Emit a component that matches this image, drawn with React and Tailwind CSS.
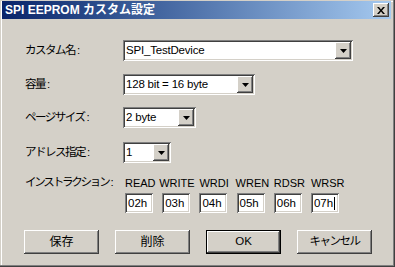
import React from "react";

const sunken =
  "shadow-[inset_1px_1px_0_#808080,inset_-1px_-1px_0_#ffffff,inset_2px_2px_0_#404040,inset_-2px_-2px_0_#d4d0c8]";
const raised =
  "shadow-[inset_-1px_-1px_0_#404040,inset_1px_1px_0_#ffffff,inset_-2px_-2px_0_#808080,inset_2px_2px_0_#d4d0c8]";

function Arrow() {
  return (
    <svg width="7" height="4" viewBox="0 0 7 4">
      <path d="M0 0H7L3.5 4Z" fill="#000" />
    </svg>
  );
}

function Combo({ width, value }) {
  return (
    <div
      className={`h-[21px] bg-white flex items-center p-[2px] ${sunken}`}
      style={{ width }}
    >
      <div className="flex-1 pl-[1px] text-[11.5px] tracking-[-0.2px] leading-[17px] whitespace-nowrap overflow-hidden">
        {value}
      </div>
      <div className={`w-[16px] h-[17px] bg-[#d4d0c8] flex items-center justify-center ${raised}`}>
        <Arrow />
      </div>
    </div>
  );
}

function Label({ text, width, tight }) {
  return (
    <div className="whitespace-nowrap flex items-center shrink-0" style={{ width }}>
      <span className={`text-[11.5px] ${tight ? "tracking-[-2.2px]" : "tracking-[-1.5px]"}`}>{text}</span>
      <span className="text-[11.5px] ml-[2px] font-['Liberation_Sans']">:</span>
    </div>
  );
}

function Row({ label, children, className = "" }) {
  return (
    <div className={`flex items-center ${className}`}>
      <Label text={label} width={98} />
      {children}
    </div>
  );
}

function Btn({ children, isDefault, kana }) {
  const txt = kana ? "text-[11.5px] tracking-[-1.5px]" : "text-[12px]";
  if (isDefault) {
    return (
      <div className="w-[75px] h-[24px] border border-black">
        <div className={`w-full h-full bg-[#d4d0c8] flex items-center justify-center ${raised}`}>
          <span className="text-[11.5px]">{children}</span>
        </div>
      </div>
    );
  }
  return (
    <div className={`w-[75px] h-[24px] bg-[#d4d0c8] flex items-center justify-center ${raised}`}>
      <span className={txt}>{children}</span>
    </div>
  );
}

const cols = [
  ["READ", "02h", "ml-0"],
  ["WRITE", "03h", "-ml-[3px]"],
  ["WRDI", "04h", "ml-0"],
  ["WREN", "05h", "-ml-[1px]"],
  ["RDSR", "06h", "ml-0"],
  ["WRSR", "07h", "ml-0"],
];

export default function App() {
  return (
    <div className="w-[395px] h-[267px] bg-[#d4d0c8] overflow-hidden text-[12px] text-black font-['Liberation_Sans','Noto_Sans_CJK_JP',sans-serif]">
      <div className="w-full h-full flex flex-col pl-[2px] pt-[1px] pr-[4px] pb-[3px] shadow-[inset_-1px_-1px_0_#404040,inset_-2px_-2px_0_#808080,inset_1px_1px_0_#d4d0c8,inset_2px_2px_0_#ffffff]">
        {/* title bar */}
        <div className="h-[18px] flex items-center justify-between pl-[3px] pr-[2px] bg-gradient-to-r from-[#0a246a] to-[#a6caf0]">
          <span className="text-white font-bold text-[12px] leading-[18px] whitespace-nowrap">
            SPI EEPROM カスタム設定
          </span>
          <div className={`w-[16px] h-[14px] bg-[#d4d0c8] flex items-center justify-center ${raised}`}>
            <svg width="8" height="7" viewBox="0 0 8 7">
              <path d="M0 0h2l2 2.5L6 0h2L5 3.5 8 7H6L4 4.5 2 7H0l3-3.5Z" fill="#000" />
            </svg>
          </div>
        </div>

        {/* body */}
        <div className="flex flex-col pl-[23px]">
          <Row label="カスタム名" className="mt-[21px]">
            <Combo width={230} value="SPI_TestDevice" />
          </Row>
          <Row label="容量" className="mt-[13px]">
            <Combo width={132} value="128 bit = 16 byte" />
          </Row>
          <Row label="ページサイズ" className="mt-[12px]">
            <Combo width={73} value="2 byte" />
          </Row>
          <Row label="アドレス指定" className="mt-[14px]">
            <Combo width={48} value="1" />
          </Row>

          <div className="flex mt-[13px]">
            <div className="h-[14px] flex items-center">
              <Label text="インストラクション" width={100} tight />
            </div>
            <div className="flex">
              {cols.map(([h, v, off], i) => (
                <div key={h} className="w-[37.2px] flex flex-col">
                  <div className={`leading-[14px] whitespace-nowrap text-[11px] ${off}`}>{h}</div>
                  <div
                    className={`mt-[3px] w-[28px] h-[20px] bg-white flex items-center pl-[3px] p-[2px] ${sunken}`}
                  >
                    <span className="leading-[16px] text-[11.5px]">{v}</span>
                    {i === 5 && <span className="w-[1px] h-[13px] bg-black ml-[1px]" />}
                  </div>
                </div>
              ))}
            </div>
          </div>

          <div className="flex gap-[16px] mt-[17px] -ml-[1px]">
            <Btn>保存</Btn>
            <Btn>削除</Btn>
            <Btn isDefault>OK</Btn>
            <Btn kana>キャンセル</Btn>
          </div>
        </div>
      </div>
    </div>
  );
}
